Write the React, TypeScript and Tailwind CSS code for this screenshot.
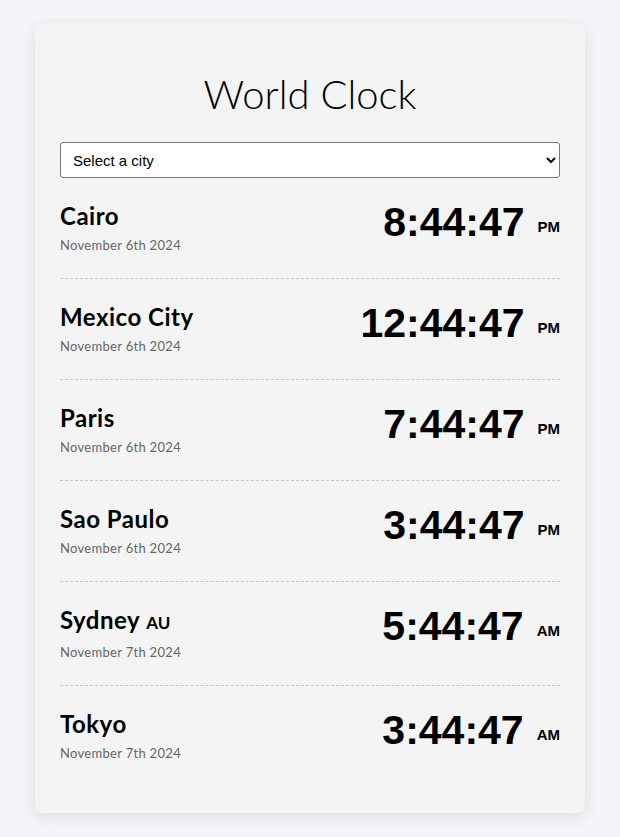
import React from 'react'

type City = {
  name: string
  suffix?: string
  date: string
  time: string
  period: 'AM' | 'PM'
}

const cities: City[] = [
  { name: 'Cairo', date: 'November 6th 2024', time: '8:44:47', period: 'PM' },
  { name: 'Mexico City', date: 'November 6th 2024', time: '12:44:47', period: 'PM' },
  { name: 'Paris', date: 'November 6th 2024', time: '7:44:47', period: 'PM' },
  { name: 'Sao Paulo', date: 'November 6th 2024', time: '3:44:47', period: 'PM' },
  { name: 'Sydney', suffix: 'AU', date: 'November 7th 2024', time: '5:44:47', period: 'AM' },
  { name: 'Tokyo', date: 'November 7th 2024', time: '3:44:47', period: 'AM' },
]

function CityRow({ city, last }: { city: City; last: boolean }) {
  return (
    <li
      className={
        'flex items-start justify-between pt-[23px] pb-[24px] ' +
        (last ? '' : 'border-b border-dashed border-[#c8c8c8]')
      }
    >
      <div className="font-['Lato',sans-serif]">
        <div className="text-[24px] font-bold leading-[30px] tracking-[0.5px] text-black">
          {city.name}
          {city.suffix && <span className="ml-[6px] text-[17px] tracking-normal">{city.suffix}</span>}
        </div>
        <div className="mt-[5px] text-[13px] leading-[18px] tracking-[0.3px] text-[#666666]">
          {city.date}
        </div>
      </div>
      <div className="-mt-[1px] flex items-start font-['Liberation_Sans',Arial,sans-serif] font-bold text-black">
        <span className="text-[41px] leading-[44px]">{city.time}</span>
        <span className="ml-[13px] mt-[19px] text-[15px] leading-[15px]">{city.period}</span>
      </div>
    </li>
  )
}

export default function App() {
  return (
    <div className="min-h-screen bg-[#f4f4f9] px-[35px] pt-[23px] pb-[25px]">
      <div className="rounded-[8px] bg-[#f4f4f4] px-[25px] pt-[47px] pb-[27px] shadow-[0_4px_16px_rgba(0,0,0,0.10)]">
        <h1 className="text-center font-['Lato',sans-serif] text-[40px] font-light leading-[48px] text-black">
          World Clock
        </h1>
        <select
          defaultValue=""
          className="mt-[24px] h-[36px] w-full rounded-[3px] border border-[#767676] bg-white px-[8px] font-['Liberation_Sans',Arial,sans-serif] text-[15px] text-black"
        >
          <option value="">Select a city</option>
          {cities.map((c) => (
            <option key={c.name} value={c.name}>
              {c.name}
            </option>
          ))}
        </select>
        <ul>
          {cities.map((c, i) => (
            <CityRow key={c.name} city={c} last={i === cities.length - 1} />
          ))}
        </ul>
      </div>
    </div>
  )
}
